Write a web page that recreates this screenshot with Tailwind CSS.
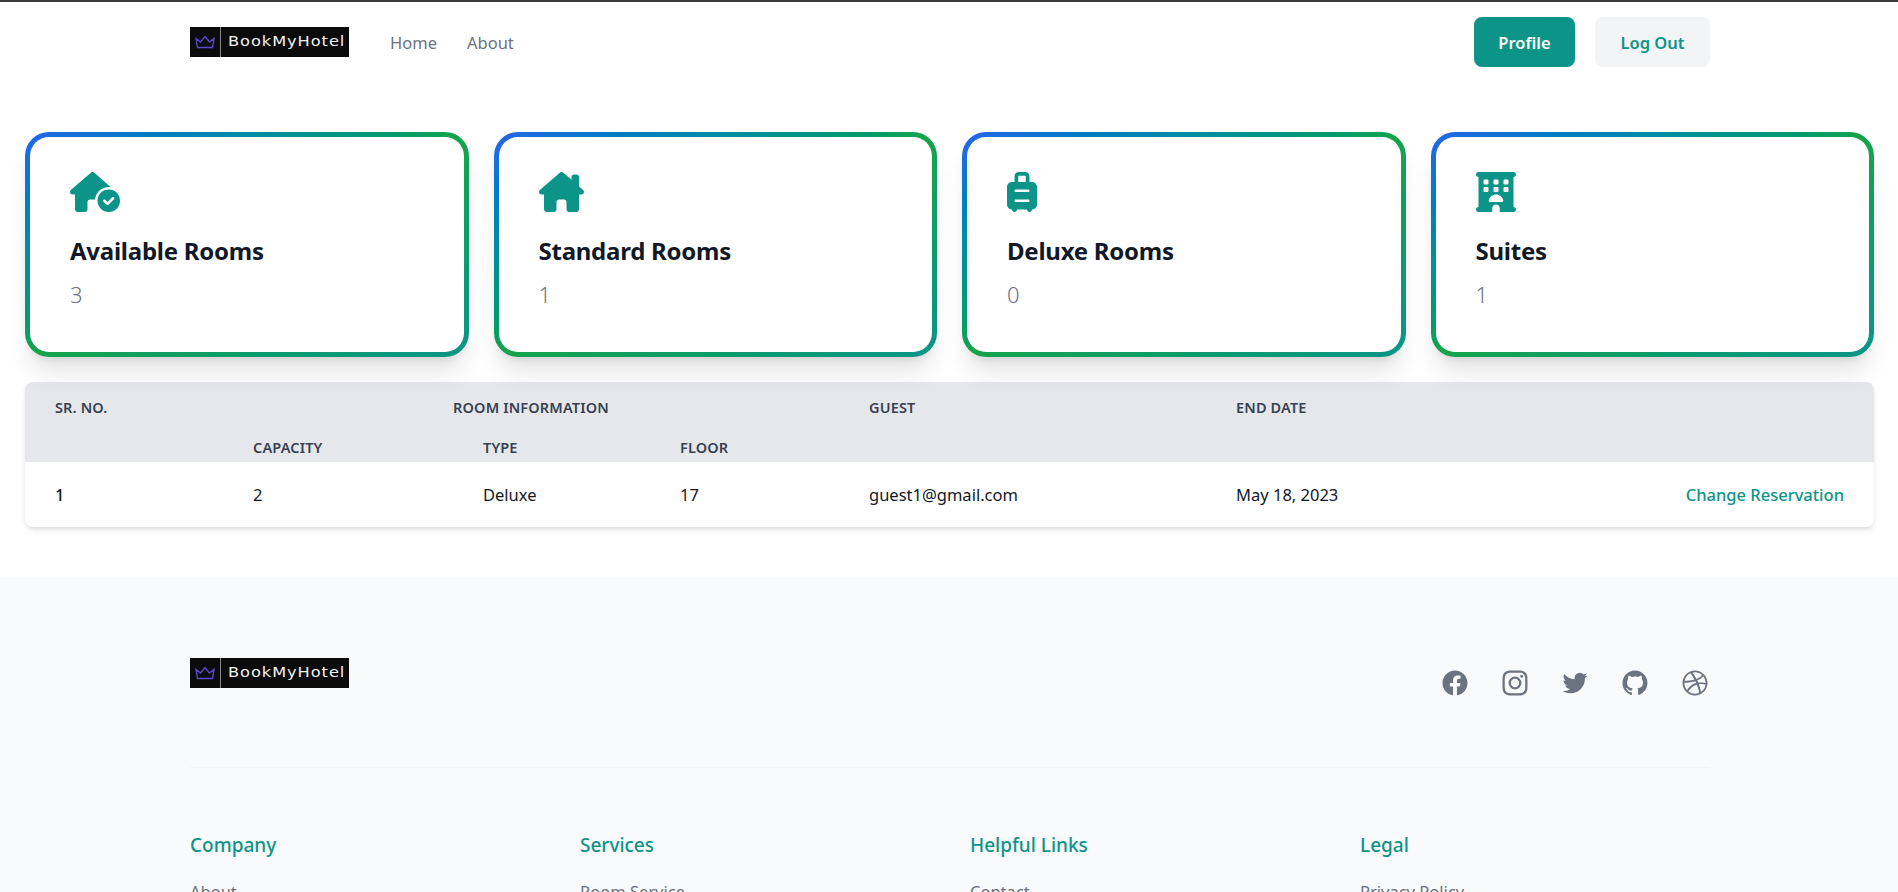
<!DOCTYPE html>
<html lang="en">
<head>
<meta charset="utf-8">
<title>BookMyHotel</title>
<script src="https://cdn.jsdelivr.net/npm/@tailwindcss/browser@4"></script>
</head>
<body class="bg-white font-['Noto_Sans','Open_Sans',sans-serif]">
<div class="h-[892px] overflow-hidden">
  <header class="border-t-2 border-[#3a3a3a] h-[132px]">
    <div class="flex items-center justify-between h-[80px] pl-[190px] pr-[188px]">
      <div class="flex items-center">
        <a class="flex items-center w-[159px] h-[30px] bg-[#0b0b0b] mr-[41px] overflow-hidden">
          <svg class="ml-[5px] w-[20px] h-[14px]" viewBox="0 0 20 14" fill="none" stroke="#5a48d0" stroke-width="1.4"><path d="M1 3.5 L5.5 7 L10 1.5 L14.5 7 L19 3.5 L17.5 12.5 H2.5 Z"/></svg>
          <span class="ml-[5px] w-px h-[30px] bg-[#8a8a8a]"></span>
          <span class="ml-[7px] font-['DejaVu_Sans'] text-[14px] leading-[30px] tracking-[0.8px] text-[#f0f0f0] -mt-[2px] whitespace-nowrap origin-left scale-x-[1.16]">BookMyHotel</span>
        </a>
        <nav class="flex gap-[30px] pt-[2px] text-[16.5px] text-[#6b7280]">
          <a>Home</a>
          <a>About</a>
        </nav>
      </div>
      <div class="flex gap-5 text-[16.5px] font-semibold">
        <button class="w-[101px] h-[50px] pt-[2px] rounded-lg bg-[#0d9488] text-white">Profile</button>
        <button class="w-[115px] h-[50px] pt-[2px] rounded-lg bg-[#f3f4f6] text-[#0d9488]">Log Out</button>
      </div>
    </div>
  </header>

  <main class="px-[25px] pr-[24px]">
    <section class="grid grid-cols-4 gap-[25px]">
      <div class="rounded-3xl p-[5px] bg-gradient-to-br from-[#2563eb] via-[#16a34a] to-[#0d9488] shadow-xl h-[225px]">
        <div class="h-full rounded-[19px] bg-white pl-[40px] pt-[35px]">
          <svg class="h-[40px] text-[#0d9488]" viewBox="0 0 640 512" fill="currentColor"><path d="M320.7 352c8.1-89.7 83.5-160 175.3-160c8.9 0 17.6 .7 26.1 1.9L309.5 7c-6-5-14-7-21-7s-15 1-22 8L10 231.5c-7 7-10 15-10 24c0 18 14 32.1 32 32.1h32v69.7c-.1 .9-.1 1.8-.1 2.8V472c0 22.1 17.9 40 40 40h16c1.2 0 2.4-.1 3.6-.2c1.5 .1 3 .2 4.5 .2H160h24c22.1 0 40-17.9 40-40V448 384c0-17.7 14.3-32 32-32h64l.7 0zM640 368a144 144 0 1 0 -288 0 144 144 0 1 0 288 0zm-76.7-43.3c6.2 6.2 6.2 16.4 0 22.6l-72 72c-6.2 6.2-16.4 6.2-22.6 0l-40-40c-6.2-6.2-6.2-16.4 0-22.6s16.4-6.2 22.6 0L480 385.4l60.7-60.7c6.2-6.2 16.4-6.2 22.6 0z"/></svg>
          <h3 class="mt-[23px] text-[24px] leading-[32px] font-bold text-[#111827] tracking-[-0.25px]">Available Rooms</h3>
          <p class="mt-[13px] text-[22px] leading-[28px] font-light text-[#6b7280]">3</p>
        </div>
      </div>
      <div class="rounded-3xl p-[5px] bg-gradient-to-br from-[#2563eb] via-[#16a34a] to-[#0d9488] shadow-xl h-[225px]">
        <div class="h-full rounded-[19px] bg-white pl-[40px] pt-[35px]">
          <svg class="h-[40px] text-[#0d9488]" viewBox="0 0 576 512" fill="currentColor"><path d="M543.8 287.6c17 0 32-14 32-32.1c1-9-3-17-11-24L512 185V64c0-17.7-14.3-32-32-32H448c-17.7 0-32 14.3-32 32v36.7L309.5 7c-6-5-14-7-21-7s-15 1-22 8L10 231.5c-7 7-10 15-10 24c0 18 14 32.1 32 32.1h32v69.7c-.1 .9-.1 1.8-.1 2.8V472c0 22.1 17.9 40 40 40h16c1.2 0 2.4-.1 3.6-.2c1.5 .1 3 .2 4.5 .2H160h24c22.1 0 40-17.9 40-40V448 384c0-17.7 14.3-32 32-32h64c17.7 0 32 14.3 32 32v64 24c0 22.1 17.9 40 40 40h24 32.5c1.4 0 2.8 0 4.2-.1c1.1 .1 2.2 .1 3.3 .1h16c22.1 0 40-17.9 40-40V455.8c.3-2.6 .5-5.3 .5-8.1l-.7-160.2h32z"/></svg>
          <h3 class="mt-[23px] text-[24px] leading-[32px] font-bold text-[#111827] tracking-[-0.25px]">Standard Rooms</h3>
          <p class="mt-[13px] text-[22px] leading-[28px] font-light text-[#6b7280]">1</p>
        </div>
      </div>
      <div class="rounded-3xl p-[5px] bg-gradient-to-br from-[#2563eb] via-[#16a34a] to-[#0d9488] shadow-xl h-[225px]">
        <div class="h-full rounded-[19px] bg-white pl-[40px] pt-[35px]">
          <svg class="h-[40px] text-[#0d9488]" viewBox="0 0 384 512" fill="currentColor"><path d="M144 56c0-4.4 3.6-8 8-8h80c4.4 0 8 3.6 8 8v72H144V56zm176 72H288V56c0-30.9-25.1-56-56-56H152C121.1 0 96 25.1 96 56v72H64c-35.3 0-64 28.7-64 64V416c0 35.3 28.7 64 64 64c0 17.7 14.3 32 32 32s32-14.3 32-32H256c0 17.7 14.3 32 32 32s32-14.3 32-32c35.3 0 64-28.7 64-64V192c0-35.3-28.7-64-64-64zM112 224H272c8.8 0 16 7.2 16 16s-7.2 16-16 16H112c-8.8 0-16-7.2-16-16s7.2-16 16-16zm0 128H272c8.8 0 16 7.2 16 16s-7.2 16-16 16H112c-8.8 0-16-7.2-16-16s7.2-16 16-16z"/></svg>
          <h3 class="mt-[23px] text-[24px] leading-[32px] font-bold text-[#111827] tracking-[-0.25px]">Deluxe Rooms</h3>
          <p class="mt-[13px] text-[22px] leading-[28px] font-light text-[#6b7280]">0</p>
        </div>
      </div>
      <div class="rounded-3xl p-[5px] bg-gradient-to-br from-[#2563eb] via-[#16a34a] to-[#0d9488] shadow-xl h-[225px]">
        <div class="h-full rounded-[19px] bg-white pl-[40px] pt-[35px]">
          <svg class="h-[40px] text-[#0d9488]" viewBox="0 0 512 512" fill="currentColor"><path d="M0 32C0 14.3 14.3 0 32 0H480c17.7 0 32 14.3 32 32s-14.3 32-32 32V448c17.7 0 32 14.3 32 32s-14.3 32-32 32H304V464c0-26.5-21.5-48-48-48s-48 21.5-48 48v48H32c-17.7 0-32-14.3-32-32s14.3-32 32-32V64C14.3 64 0 49.7 0 32zm96 80v32c0 8.8 7.2 16 16 16h32c8.8 0 16-7.2 16-16V112c0-8.8-7.2-16-16-16H112c-8.8 0-16 7.2-16 16zM240 96c-8.8 0-16 7.2-16 16v32c0 8.8 7.2 16 16 16h32c8.8 0 16-7.2 16-16V112c0-8.8-7.2-16-16-16H240zm112 16v32c0 8.8 7.2 16 16 16h32c8.8 0 16-7.2 16-16V112c0-8.8-7.2-16-16-16H368c-8.8 0-16 7.2-16 16zM112 192c-8.8 0-16 7.2-16 16v32c0 8.8 7.2 16 16 16h32c8.8 0 16-7.2 16-16V208c0-8.8-7.2-16-16-16H112zm112 16v32c0 8.8 7.2 16 16 16h32c8.8 0 16-7.2 16-16V208c0-8.8-7.2-16-16-16H240c-8.8 0-16 7.2-16 16zM368 192c-8.8 0-16 7.2-16 16v32c0 8.8 7.2 16 16 16h32c8.8 0 16-7.2 16-16V208c0-8.8-7.2-16-16-16H368zM328 384c13.3 0 24.3-10.9 21-23.8c-10.6-41.5-48.2-72.2-93-72.2s-82.5 30.7-93 72.2c-3.3 12.8 7.8 23.8 21 23.8H328z"/></svg>
          <h3 class="mt-[23px] text-[24px] leading-[32px] font-bold text-[#111827] tracking-[-0.25px]">Suites</h3>
          <p class="mt-[13px] text-[22px] leading-[28px] font-light text-[#6b7280]">1</p>
        </div>
      </div>
    </section>

    <section class="mt-[25px] rounded-lg overflow-hidden shadow-md bg-white">
      <table class="w-full table-fixed text-left">
        <colgroup>
          <col class="w-[198px]"><col class="w-[230px]"><col class="w-[197px]"><col class="w-[189px]"><col class="w-[367px]"><col class="w-[330px]"><col>
        </colgroup>
        <thead class="bg-[#e5e7eb] text-[14.5px] leading-[20px] uppercase text-[#374151] tracking-[0.15px]">
          <tr class="h-[50px]">
            <th class="pl-[30px] font-semibold">Sr. No.</th>
            <th colspan="3" class="text-center font-semibold">Room Information</th>
            <th class="pl-[30px] font-semibold">Guest</th>
            <th class="pl-[30px] font-semibold">End Date</th>
            <th></th>
          </tr>
          <tr class="h-[30px]">
            <th></th>
            <th class="pl-[30px] font-semibold">Capacity</th>
            <th class="pl-[30px] font-semibold">Type</th>
            <th class="pl-[30px] font-semibold">Floor</th>
            <th></th><th></th><th></th>
          </tr>
        </thead>
        <tbody class="text-[16.5px] text-[#111827]">
          <tr class="h-[65px]">
            <td class="pl-[30px] pt-[2px] font-medium">1</td>
            <td class="pl-[30px] pt-[2px]">2</td>
            <td class="pl-[30px] pt-[2px]">Deluxe</td>
            <td class="pl-[30px] pt-[2px]">17</td>
            <td class="pl-[30px] pt-[2px]">guest1@gmail.com</td>
            <td class="pl-[30px] pt-[2px]">May 18, 2023</td>
            <td class="pr-[30px] pt-[2px] text-right font-medium text-[#0d9488] whitespace-nowrap">Change Reservation</td>
          </tr>
        </tbody>
      </table>
    </section>
  </main>

  <footer class="mt-[50px] bg-[#f9fafb] pl-[190px] pr-[188px] pt-[81px]">
    <div class="flex items-start justify-between h-[110px] border-b border-[#f3f4f6]">
      <a class="flex items-center w-[159px] h-[30px] bg-[#0b0b0b] overflow-hidden">
        <svg class="ml-[5px] w-[20px] h-[14px]" viewBox="0 0 20 14" fill="none" stroke="#5a48d0" stroke-width="1.4"><path d="M1 3.5 L5.5 7 L10 1.5 L14.5 7 L19 3.5 L17.5 12.5 H2.5 Z"/></svg>
        <span class="ml-[5px] w-px h-[30px] bg-[#8a8a8a]"></span>
        <span class="ml-[7px] font-['DejaVu_Sans'] text-[14px] leading-[30px] tracking-[0.8px] text-[#f0f0f0] -mt-[2px] whitespace-nowrap origin-left scale-x-[1.16]">BookMyHotel</span>
      </a>
      <div class="flex gap-[30px] mt-[10px] text-[#6b7280]">
        <svg class="w-[30px] h-[30px]" viewBox="0 0 24 24" fill="currentColor"><path d="M22 12c0-5.523-4.477-10-10-10S2 6.477 2 12c0 4.991 3.657 9.128 8.438 9.878v-6.987h-2.54V12h2.54V9.797c0-2.506 1.492-3.89 3.777-3.89 1.094 0 2.238.195 2.238.195v2.46h-1.26c-1.243 0-1.63.771-1.63 1.562V12h2.773l-.443 2.89h-2.33v6.988C18.343 21.128 22 16.991 22 12z"/></svg>
        <svg class="w-[30px] h-[30px]" viewBox="0 0 24 24" fill="currentColor"><path fill-rule="evenodd" clip-rule="evenodd" d="M12.315 2c2.43 0 2.784.013 3.808.06 1.064.049 1.791.218 2.427.465a4.902 4.902 0 011.772 1.153 4.902 4.902 0 011.153 1.772c.247.636.416 1.363.465 2.427.048 1.067.06 1.407.06 4.123v.08c0 2.643-.012 2.987-.06 4.043-.049 1.064-.218 1.791-.465 2.427a4.902 4.902 0 01-1.153 1.772 4.902 4.902 0 01-1.772 1.153c-.636.247-1.363.416-2.427.465-1.067.048-1.407.06-4.123.06h-.08c-2.643 0-2.987-.012-4.043-.06-1.064-.049-1.791-.218-2.427-.465a4.902 4.902 0 01-1.772-1.153 4.902 4.902 0 01-1.153-1.772c-.247-.636-.416-1.363-.465-2.427-.047-1.024-.06-1.379-.06-3.808v-.63c0-2.43.013-2.784.06-3.808.049-1.064.218-1.791.465-2.427a4.902 4.902 0 011.153-1.772A4.902 4.902 0 015.45 2.525c.636-.247 1.363-.416 2.427-.465C8.901 2.013 9.256 2 11.685 2h.63zm-.081 1.802h-.468c-2.456 0-2.784.011-3.807.058-.975.045-1.504.207-1.857.344-.467.182-.8.398-1.15.748-.35.35-.566.683-.748 1.15-.137.353-.3.882-.344 1.857-.047 1.023-.058 1.351-.058 3.807v.468c0 2.456.011 2.784.058 3.807.045.975.207 1.504.344 1.857.182.466.399.8.748 1.15.35.35.683.566 1.15.748.353.137.882.3 1.857.344 1.054.048 1.37.058 4.041.058h.08c2.597 0 2.917-.01 3.96-.058.976-.045 1.505-.207 1.858-.344.466-.182.8-.398 1.15-.748.35-.35.566-.683.748-1.15.137-.353.3-.882.344-1.857.048-1.055.058-1.37.058-4.041v-.08c0-2.597-.01-2.917-.058-3.96-.045-.976-.207-1.505-.344-1.858a3.097 3.097 0 00-.748-1.15 3.098 3.098 0 00-1.15-.748c-.353-.137-.882-.3-1.857-.344-1.023-.047-1.351-.058-3.807-.058zM12 6.865a5.135 5.135 0 110 10.27 5.135 5.135 0 010-10.27zm0 1.802a3.333 3.333 0 100 6.666 3.333 3.333 0 000-6.666zm5.338-3.205a1.2 1.2 0 110 2.4 1.2 1.2 0 010-2.4z"/></svg>
        <svg class="w-[30px] h-[30px]" viewBox="0 0 24 24" fill="currentColor"><path d="M8.29 20.251c7.547 0 11.675-6.253 11.675-11.675 0-.178 0-.355-.012-.53A8.348 8.348 0 0022 5.92a8.19 8.19 0 01-2.357.646 4.118 4.118 0 001.804-2.27 8.224 8.224 0 01-2.605.996 4.107 4.107 0 00-6.993 3.743 11.65 11.65 0 01-8.457-4.287 4.106 4.106 0 001.27 5.477A4.072 4.072 0 012.8 9.713v.052a4.105 4.105 0 003.292 4.022 4.095 4.095 0 01-1.853.07 4.108 4.108 0 003.834 2.85A8.233 8.233 0 012 18.407a11.616 11.616 0 006.29 1.84"/></svg>
        <svg class="w-[30px] h-[30px]" viewBox="0 0 24 24" fill="currentColor"><path fill-rule="evenodd" clip-rule="evenodd" d="M12 2C6.477 2 2 6.484 2 12.017c0 4.425 2.865 8.18 6.839 9.504.5.092.682-.217.682-.483 0-.237-.008-.868-.013-1.703-2.782.605-3.369-1.343-3.369-1.343-.454-1.158-1.11-1.466-1.11-1.466-.908-.62.069-.608.069-.608 1.003.07 1.531 1.032 1.531 1.032.892 1.53 2.341 1.088 2.91.832.092-.647.35-1.088.636-1.338-2.22-.253-4.555-1.113-4.555-4.951 0-1.093.39-1.988 1.029-2.688-.103-.253-.446-1.272.098-2.65 0 0 .84-.27 2.75 1.026A9.564 9.564 0 0112 6.844c.85.004 1.705.115 2.504.337 1.909-1.296 2.747-1.027 2.747-1.027.546 1.379.202 2.398.1 2.651.64.7 1.028 1.595 1.028 2.688 0 3.848-2.339 4.695-4.566 4.943.359.309.678.92.678 1.855 0 1.338-.012 2.419-.012 2.747 0 .268.18.58.688.482A10.019 10.019 0 0022 12.017C22 6.484 17.522 2 12 2z"/></svg>
        <svg class="w-[30px] h-[30px]" viewBox="0 0 24 24" fill="currentColor"><path fill-rule="evenodd" clip-rule="evenodd" d="M12 2C6.48 2 2 6.48 2 12s4.48 10 10 10c5.51 0 10-4.48 10-10S17.51 2 12 2zm6.605 4.61a8.502 8.502 0 011.93 5.314c-.281-.054-3.101-.629-5.943-.271-.065-.141-.12-.293-.184-.445a25.416 25.416 0 00-.564-1.236c3.145-1.28 4.577-3.124 4.761-3.362zM12 3.475c2.17 0 4.154.813 5.662 2.148-.152.216-1.443 1.941-4.48 3.08-1.399-2.57-2.95-4.675-3.189-5A8.687 8.687 0 0112 3.475zm-3.633.803a53.896 53.896 0 013.167 4.935c-3.992 1.063-7.517 1.04-7.896 1.04a8.581 8.581 0 014.729-5.975zM3.453 12.01v-.26c.37.01 4.512.065 8.775-1.215.25.477.477.965.694 1.453-.109.033-.228.065-.336.098-4.404 1.42-6.747 5.303-6.942 5.629a8.522 8.522 0 01-2.19-5.705zM12 20.547a8.482 8.482 0 01-5.239-1.8c.152-.315 1.888-3.656 6.703-5.337.022-.01.033-.01.054-.022a35.318 35.318 0 011.823 6.475 8.4 8.4 0 01-3.341.684zm4.761-1.465c-.086-.52-.542-3.015-1.659-6.084 2.679-.423 5.022.271 5.314.369a8.468 8.468 0 01-3.655 5.715z"/></svg>
      </div>
    </div>
    <div class="grid grid-cols-[390px_390px_390px_1fr] pt-[63px]">
      <div>
        <h4 class="text-[19px] leading-[28px] font-medium text-[#0d9488]">Company</h4>
        <a class="block mt-[21px] text-[16.5px] text-[#6b7280]">About</a>
      </div>
      <div>
        <h4 class="text-[19px] leading-[28px] font-medium text-[#0d9488]">Services</h4>
        <a class="block mt-[21px] text-[16.5px] text-[#6b7280]">Room Service</a>
      </div>
      <div>
        <h4 class="text-[19px] leading-[28px] font-medium text-[#0d9488]">Helpful Links</h4>
        <a class="block mt-[21px] text-[16.5px] text-[#6b7280]">Contact</a>
      </div>
      <div>
        <h4 class="text-[19px] leading-[28px] font-medium text-[#0d9488]">Legal</h4>
        <a class="block mt-[21px] text-[16.5px] text-[#6b7280]">Privacy Policy</a>
      </div>
    </div>
  </footer>
</div>
</body>
</html>
